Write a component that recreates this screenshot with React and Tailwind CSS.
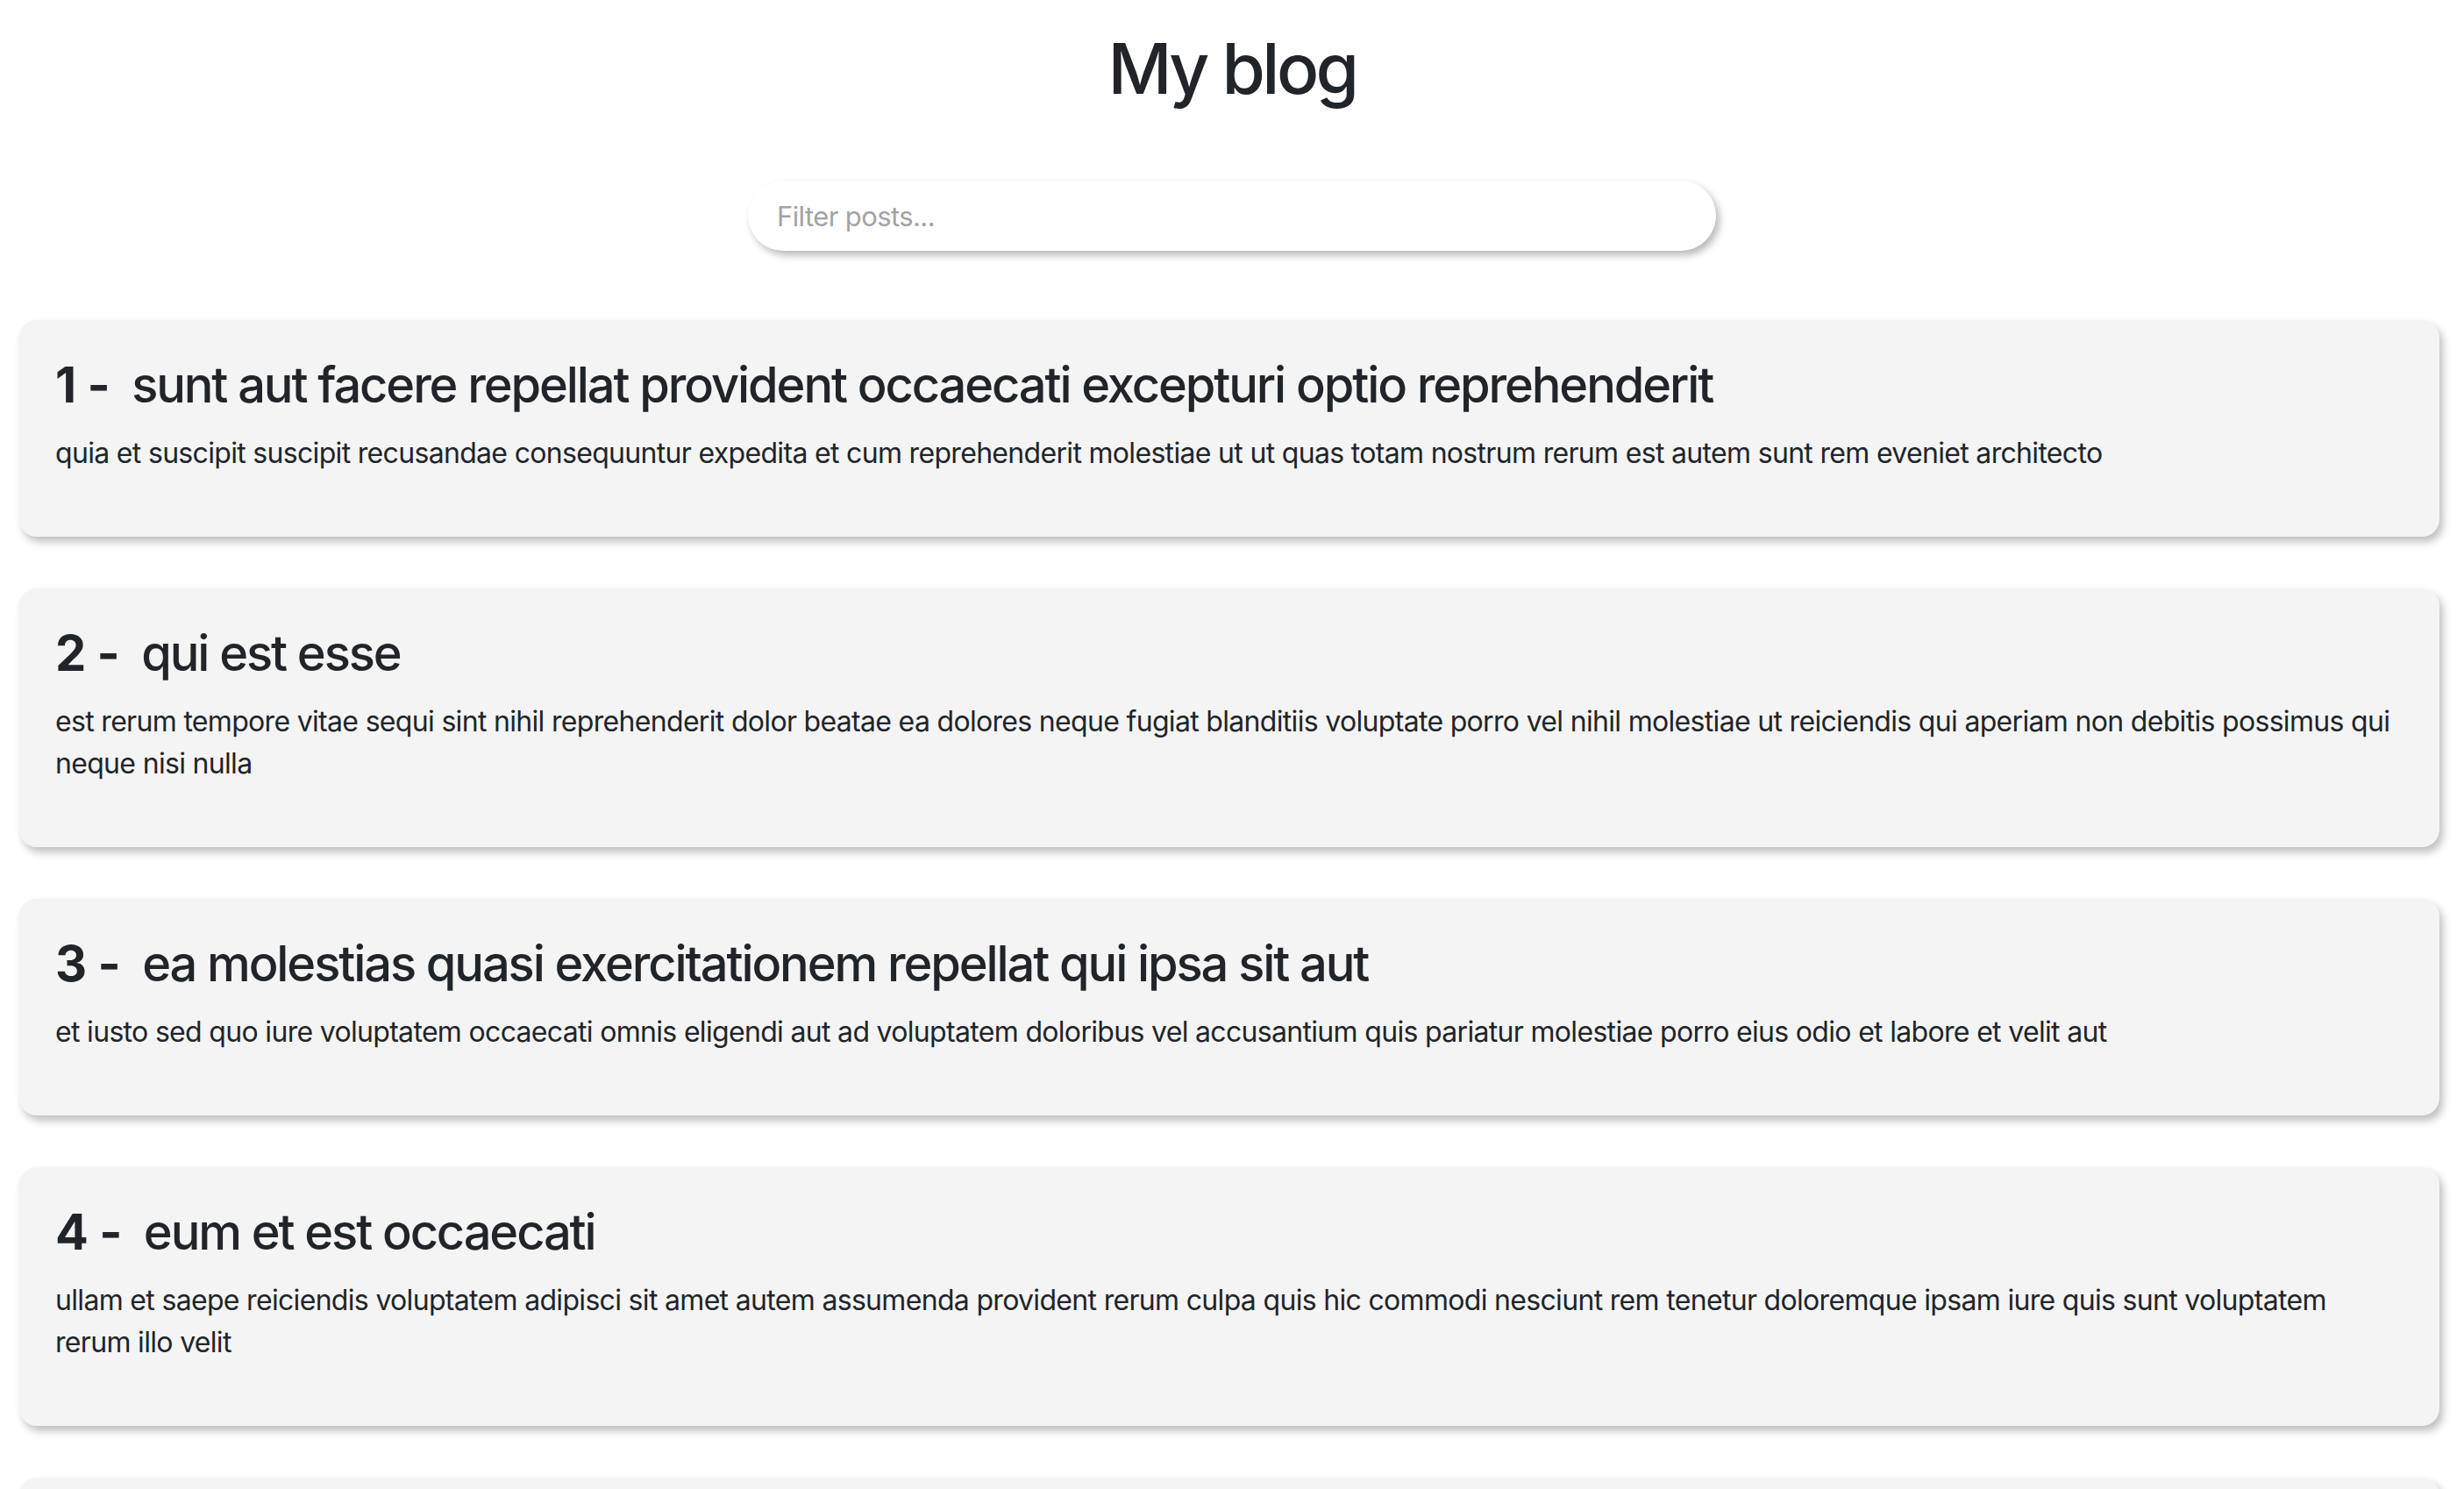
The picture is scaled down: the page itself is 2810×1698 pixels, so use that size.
import React from "react";

const posts = [
  {
    id: 1,
    title: "sunt aut facere repellat provident occaecati excepturi optio reprehenderit",
    body: "quia et suscipit suscipit recusandae consequuntur expedita et cum reprehenderit molestiae ut ut quas totam nostrum rerum est autem sunt rem eveniet architecto",
  },
  {
    id: 2,
    title: "qui est esse",
    body: "est rerum tempore vitae sequi sint nihil reprehenderit dolor beatae ea dolores neque fugiat blanditiis voluptate porro vel nihil molestiae ut reiciendis qui aperiam non debitis possimus qui neque nisi nulla",
  },
  {
    id: 3,
    title: "ea molestias quasi exercitationem repellat qui ipsa sit aut",
    body: "et iusto sed quo iure voluptatem occaecati omnis eligendi aut ad voluptatem doloribus vel accusantium quis pariatur molestiae porro eius odio et labore et velit aut",
  },
  {
    id: 4,
    title: "eum et est occaecati",
    body: "ullam et saepe reiciendis voluptatem adipisci sit amet autem assumenda provident rerum culpa quis hic commodi nesciunt rem tenetur doloremque ipsam iure quis sunt voluptatem rerum illo velit",
  },
  {
    id: 5,
    title: "nesciunt quas odio",
    body: "repudiandae veniam quaerat sunt sed alias aut fugiat sit autem sed est voluptatem omnis possimus esse voluptatibus quis est aut tenetur dolor neque",
  },
  {
    id: 6,
    title: "dolorem eum magni eos aperiam quia",
    body: "ut aspernatur corporis harum nihil quis provident sequi mollitia nobis aliquid molestiae perspiciatis et ea nemo ab reprehenderit accusantium quas voluptate dolores velit et doloremque molestiae",
  },
];

export default function App() {
  return (
    <div className="min-h-screen bg-white text-[#212529] font-['Inter','Liberation_Sans',sans-serif]">
      <h1 className="pt-[30px] text-center text-[80px] leading-[96px] font-medium tracking-[-3.6px]">My blog</h1>
      <div className="mt-[80px] flex justify-center">
        <input
          type="text"
          placeholder="Filter posts..."
          className="w-[1104px] h-[80px] rounded-[40px] bg-white pl-[33px] text-[31px] tracking-[-0.6px] outline-none placeholder:text-[#a3a3a3] shadow-[4px_5px_9px_rgba(0,0,0,0.28)]"
        />
      </div>
      <div className="mt-[79px] flex flex-col gap-[59px] pb-[60px]">
        {posts.map((p) => (
          <div
            key={p.id}
            className="ml-[22px] mr-[28px] rounded-[20px] bg-[#f4f4f4] pt-[41px] pb-[39px] pl-[41px] pr-[36px] shadow-[4px_6px_10px_rgba(0,0,0,0.25)]"
          >
            <h3 className="text-[56px] leading-[67px] font-medium mb-[20px] tracking-[-2.1px]">
              <span className="font-bold tracking-[-0.5px]">{p.id} -</span>
              <span className="ml-[25px]">{p.title}</span>
            </h3>
            <p className="text-[32px] leading-[48px] mb-[32px] tracking-[-0.68px]">{p.body}</p>
          </div>
        ))}
      </div>
    </div>
  );
}
